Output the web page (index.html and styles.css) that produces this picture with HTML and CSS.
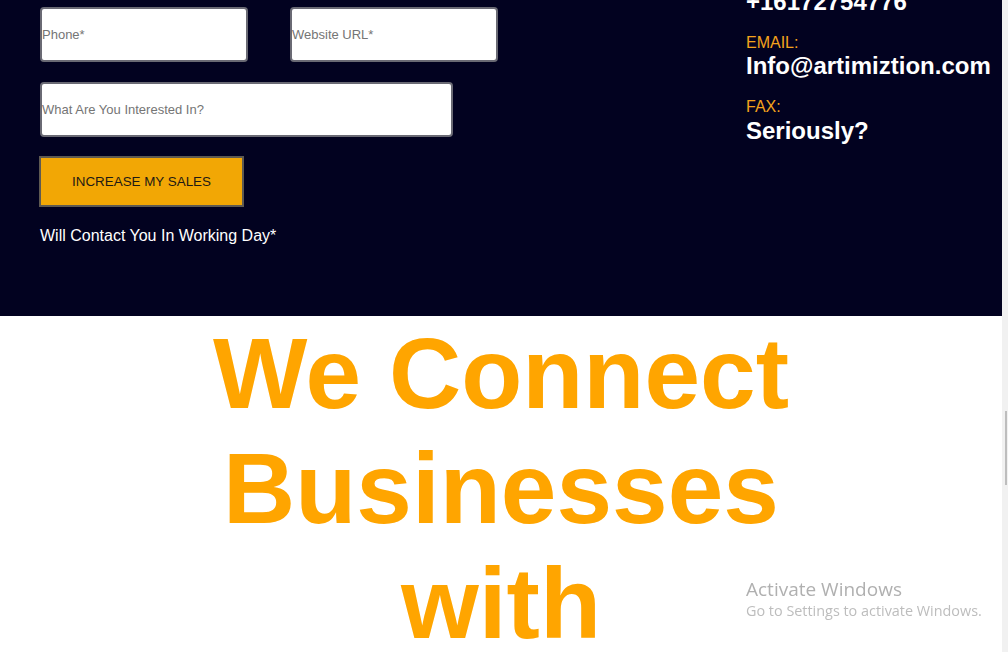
FILE: index.html
```html
<!DOCTYPE html>
<html lang="en">
<head>
<meta charset="utf-8">
<title>Contact</title>
<link rel="stylesheet" href="styles.css">
</head>
<body>
<div class="page">
  <main class="content">
    <section class="contact">
      <form class="form">
        <div class="form-row">
          <input class="field" type="text" placeholder="Phone*">
          <input class="field" type="text" placeholder="Website URL*">
        </div>
        <input class="field field-wide" type="text" placeholder="What Are You Interested In?">
        <button class="submit" type="button">INCREASE MY SALES</button>
        <p class="note">Will Contact You In Working Day*</p>
      </form>
      <div class="info">
        <div class="info-item">
          <div class="info-label">PHONE:</div>
          <div class="info-value">+16172754776</div>
        </div>
        <div class="info-item">
          <div class="info-label">EMAIL:</div>
          <div class="info-value">Info@artimiztion.com</div>
        </div>
        <div class="info-item">
          <div class="info-label">FAX:</div>
          <div class="info-value">Seriously?</div>
        </div>
      </div>
    </section>
    <section class="hero">
      <h1 class="hero-title">We Connect Businesses with</h1>
    </section>
  </main>
  <div class="scrollbar"><div class="scrollbar-thumb"></div></div>
</div>
<div class="watermark">
  <div class="watermark-title">Activate Windows</div>
  <div class="watermark-sub">Go to Settings to activate Windows.</div>
</div>
</body>
</html>
```
FILE: styles.css
```css
html, body {
  margin: 0;
  padding: 0;
  height: 100%;
  overflow: hidden;
  background: #ffffff;
  font-family: "Liberation Sans", Arial, sans-serif;
}

.page {
  display: flex;
  height: 100%;
}

.content {
  flex: 1;
  min-width: 0;
}

.contact {
  background: #020220;
  height: 316px;
  box-sizing: border-box;
  padding-left: 40px;
  display: grid;
  grid-template-columns: 706px 1fr;
  overflow: hidden;
}

.form {
  margin-top: 7px;
  display: flex;
  flex-direction: column;
  align-items: flex-start;
  gap: 19.5px;
}

.form-row {
  display: flex;
  gap: 42px;
}

.field {
  box-sizing: border-box;
  width: 208px;
  height: 55px;
  border: 2px solid #6a6a74;
  border-radius: 4px;
  background: #ffffff;
  padding: 0;
  margin: 0;
  font-family: "Liberation Sans", Arial, sans-serif;
  font-size: 13px;
  color: #222;
  outline: none;
}

.field::placeholder {
  color: #757575;
}

.field-wide {
  width: 413px;
}

.submit {
  box-sizing: border-box;
  width: 205px;
  height: 51px;
  margin-left: -1px;
  background: #f2a705;
  border: 2px solid #5e5a52;
  border-radius: 0;
  font-family: "Liberation Sans", Arial, sans-serif;
  font-size: 13.4px;
  color: #1e1a14;
  padding: 0;
  cursor: pointer;
}

.note {
  margin: 0;
  color: #ffffff;
  font-size: 16px;
  line-height: 18px;
}

.info {
  margin-top: -31px;
  display: flex;
  flex-direction: column;
  gap: 18px;
}

.info-label {
  color: #f4a21c;
  font-size: 16px;
  line-height: 18.5px;
}

.info-value {
  color: #ffffff;
  font-size: 24px;
  line-height: 28px;
  font-weight: bold;
}

.hero {
  background: #ffffff;
}

.hero-title {
  margin: 0 auto;
  max-width: 640px;
  text-align: center;
  font-family: "Liberation Sans", Arial, sans-serif;
  font-weight: bold;
  font-size: 100px;
  line-height: 115px;
  color: #ffa500;
}

.scrollbar {
  width: 6px;
  flex: none;
  background: #f1f1f1;
  padding-top: 411px;
  box-sizing: border-box;
  display: flex;
  justify-content: flex-end;
}

.scrollbar-thumb {
  width: 2px;
  height: 74px;
  margin-right: 1px;
  background: #bdbdbd;
}

.watermark {
  position: fixed;
  left: 746px;
  top: 577px;
  font-family: "Open Sans", "Noto Sans", sans-serif;
  pointer-events: none;
}

.watermark-title {
  font-size: 19px;
  line-height: 24px;
  color: #b0b0b0;
}

.watermark-sub {
  font-size: 14.4px;
  line-height: 20px;
  color: #bdbdbd;
}
```
